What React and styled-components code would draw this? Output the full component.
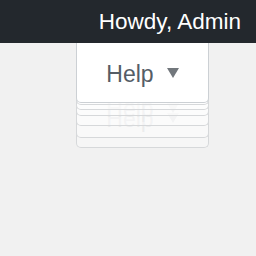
import React from 'react';
import styled, { createGlobalStyle, css } from 'styled-components';

const GlobalStyle = createGlobalStyle`
  html, body {
    margin: 0;
    padding: 0;
    background: #f1f1f1;
    font-family: "Liberation Sans", Arial, sans-serif;
    -webkit-font-smoothing: antialiased;
  }
`;

const AdminBar = styled.div`
  height: 43px;
  background: #23282d;
  display: flex;
  justify-content: flex-end;
  align-items: center;
  padding-right: 15px;
`;

const Howdy = styled.span`
  color: #fff;
  font-size: 22.5px;
  line-height: 1;
  margin-top: 2px;
`;

const ScreenMeta = styled.div`
  display: flex;
  justify-content: flex-end;
  padding-right: 47px;
  height: 120px;
`;

const TabStack = styled.div`
  position: relative;
  width: 133px;
  height: 105px;
`;

const tabBox = css`
  box-sizing: border-box;
  width: 133px;
  height: 60px;
  border: 1px solid;
  border-top: none;
  border-radius: 0 0 5px 5px;
  display: flex;
  align-items: center;
  justify-content: center;
  gap: 13px;
  font-size: 23px;
  padding-top: 4px;
`;

const Tab = styled.div`
  ${tabBox}
  position: relative;
  z-index: 10;
  background: #fff;
  border-color: #ccd0d4;
  color: #555d66;
`;

const Ghost = styled.div`
  ${tabBox}
  position: absolute;
  left: 0;
  top: ${p => p.$offset}px;
  z-index: ${p => 9 - p.$index};
  background: rgba(255, 255, 255, 0.4);
  border-color: #d6d8da;
  color: #dee0e2;
`;

const Arrow = styled.span`
  width: 0;
  height: 0;
  border-left: 6.5px solid transparent;
  border-right: 6.5px solid transparent;
  border-top: 10px solid ${p => (p.$faded ? '#dee0e2' : '#72777c')};
  margin-top: -3px;
`;

const offsets = [2, 7, 13, 23, 35, 45];

export default function App() {
  return (
    <>
      <GlobalStyle />
      <AdminBar>
        <Howdy>Howdy, Admin</Howdy>
      </AdminBar>
      <ScreenMeta>
        <TabStack>
          <Tab>
            <span>Help</span>
            <Arrow />
          </Tab>
          {offsets.map((o, i) => (
            <Ghost key={o} $offset={o} $index={i} aria-hidden="true">
              <span>Help</span>
              <Arrow $faded />
            </Ghost>
          ))}
        </TabStack>
      </ScreenMeta>
    </>
  );
}
